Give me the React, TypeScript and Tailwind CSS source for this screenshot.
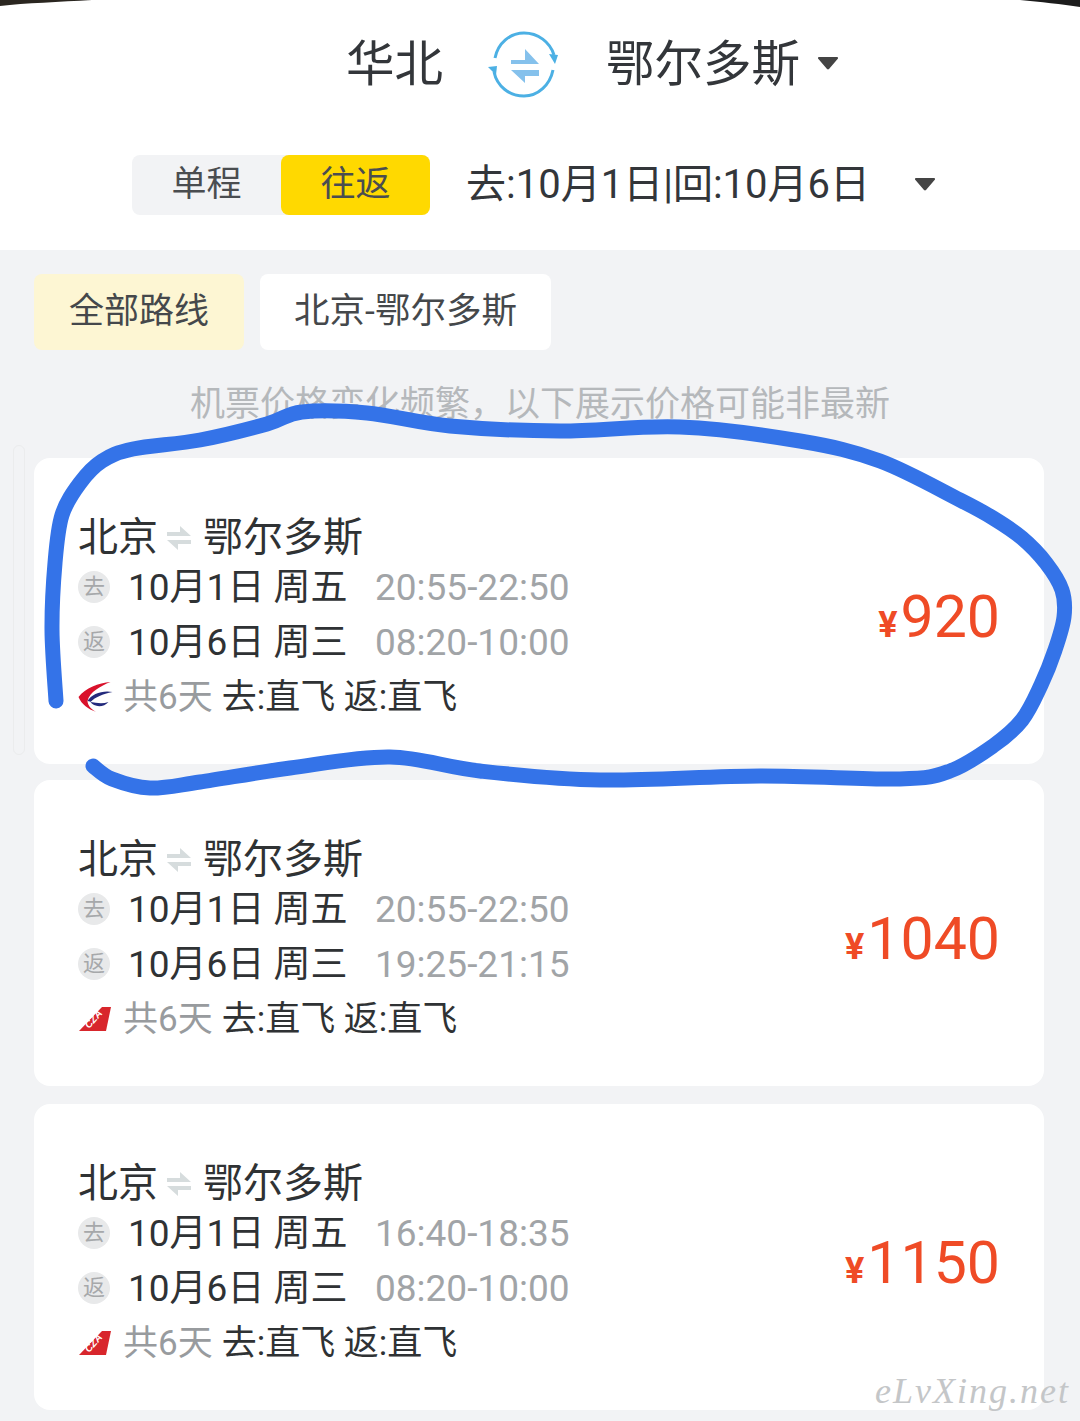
const font = { fontFamily: 'Roboto, "Noto Sans CJK SC", sans-serif' }

interface Flight {
  outTime: string
  backTime: string
  price: string
  logo: 'mu' | 'cz'
}

const flights: Flight[] = [
  { outTime: '20:55-22:50', backTime: '08:20-10:00', price: '920', logo: 'mu' },
  { outTime: '20:55-22:50', backTime: '19:25-21:15', price: '1040', logo: 'cz' },
  { outTime: '16:40-18:35', backTime: '08:20-10:00', price: '1150', logo: 'cz' },
]

// hand drawn marker loop over the first card
const loop: [number, number][] = [
  [56, 701], [52, 630], [55, 563], [62, 515], [80, 483], [102, 461], [133, 449], [200, 440], [267, 424],
  [302, 412], [367, 413], [450, 426], [560, 431], [680, 427], [800, 441], [880, 461], [960, 500], [993, 518],
  [1022, 538], [1046, 563], [1062, 590], [1064, 617], [1055, 650], [1041, 685], [1022, 720], [993, 746],
  [950, 771], [900, 779], [760, 776], [600, 780], [480, 771], [390, 757], [290, 768], [200, 782], [150, 788],
  [112, 779], [93, 766],
]

function smooth(pts: [number, number][]) {
  let d = `M${pts[0][0]} ${pts[0][1]}`
  for (let i = 0; i < pts.length - 1; i++) {
    const p0 = pts[Math.max(i - 1, 0)]
    const p1 = pts[i]
    const p2 = pts[i + 1]
    const p3 = pts[Math.min(i + 2, pts.length - 1)]
    d += `C${p1[0] + (p2[0] - p0[0]) / 6} ${p1[1] + (p2[1] - p0[1]) / 6} ${p2[0] - (p3[0] - p1[0]) / 6} ${p2[1] - (p3[1] - p1[1]) / 6} ${p2[0]} ${p2[1]}`
  }
  return d
}

function SwapIcon() {
  return (
    <svg width="74" height="70" viewBox="0 0 74 70" fill="none" className="shrink-0">
      <path d="M8 28C11 13 23 3 37 3c14 0 26 9 30 22" stroke="#4cb0e4" strokeWidth="3" />
      <path d="M66 40c-3 15-15 26-29 26-15 0-27-10-30-24" stroke="#4cb0e4" strokeWidth="3" />
      <path d="M62 24l9 1-3 9z" fill="#4cb0e4" />
      <path d="M1 37l9-1-1 9z" fill="#4cb0e4" />
      <path d="M24 30h14V19l14 15H24z" fill="#85c1ec" />
      <path d="M52 40H24l14 13v-7h14z" fill="#85c1ec" />
    </svg>
  )
}

function SmallSwap() {
  return (
    <svg width="24" height="26" viewBox="0 0 24 26" className="shrink-0">
      <path d="M0 11h24L13 1v6H0z" fill="#d6dcdd" />
      <path d="M24 15H0l11 10v-6h13z" fill="#d6dcdd" />
    </svg>
  )
}

function Caret({ className }: { className: string }) {
  return (
    <svg width="20" height="14" viewBox="0 0 20 14" className={className}>
      <path d="M1 1h18a1 1 0 0 1 1 1.500L11 13a1.500 1.500 0 0 1-2 0L0 2.500A1 1 0 0 1 1 1z" fill="#444" />
    </svg>
  )
}

function MuLogo() {
  return (
    <svg width="35" height="30" viewBox="0 0 34 30" className="shrink-0">
      <path d="M32 0C20 1 7 6 0 15c3 7 9 12 18 15-4-2-9-6-9-11C11 10 22 4 32 0z" fill="#d9122c" />
      <path d="M34 10c-10-2-21 2-25 9 2 0 3 1 3 1 5-5 12-8 22-10z" fill="#232a7c" />
      <path d="M30 20c-6 2-12 1-18 0 3 5 13 6 18 0z" fill="#232a7c" />
    </svg>
  )
}

function CzLogo() {
  return (
    <svg width="34" height="26" viewBox="0 0 34 26" className="shrink-0">
      <path d="M1 25L24 1h9l-5 24z" fill="#d8262c" />
      <text
        x="11"
        y="23"
        fill="#fff"
        fontSize="10"
        fontWeight="700"
        fontStyle="italic"
        fontFamily="Liberation Sans"
        transform="rotate(-48 11 23)"
      >
        CZA
      </text>
    </svg>
  )
}

function LegBadge({ label }: { label: string }) {
  return (
    <span className="w-[32px] h-[32px] rounded-full bg-[#e8e9ea] text-[#a6a8aa] text-[22px] leading-none flex items-center justify-center shrink-0">
      {label}
    </span>
  )
}

function FlightCard({ flight }: { flight: Flight }) {
  return (
    <div className="h-[306px] rounded-[16px] bg-white pl-[44px] pr-[44px] flex items-center justify-between last:mt-[2px]">
      <div className="mt-[18px]">
        <div className="h-[44px] flex items-center text-[40px] leading-none text-[#2f3234]">
          <span>北京</span>
          <span className="ml-[9px] mr-[12px] flex"><SmallSwap /></span>
          <span>鄂尔多斯</span>
        </div>
        <div className="h-[55px] flex items-center">
          <LegBadge label="去" />
          <span className="ml-[18px] text-[37px] leading-none text-[#2f3234] w-[247px] whitespace-nowrap">10月1日 周五</span>
          <span className="text-[37px] leading-none text-[#a1a4a7]">{flight.outTime}</span>
        </div>
        <div className="h-[55px] flex items-center">
          <LegBadge label="返" />
          <span className="ml-[18px] text-[37px] leading-none text-[#2f3234] w-[247px] whitespace-nowrap">10月6日 周三</span>
          <span className="text-[37px] leading-none text-[#a1a4a7]">{flight.backTime}</span>
        </div>
        <div className="h-[55px] flex items-center">
          <span className="w-[35px] flex">{flight.logo === 'mu' ? <MuLogo /> : <CzLogo />}</span>
          <span className="ml-[10px] text-[35px] leading-none text-[#989b9e]">共6天</span>
          <span className="ml-[9px] text-[35px] leading-none text-[#2f3234] whitespace-nowrap">去:直飞 返:直飞</span>
        </div>
      </div>
      <div className="mt-[10px] flex items-baseline text-[#ef4b26] leading-none">
        <span className="text-[36px] font-bold mr-[3px]">¥</span>
        <span className="text-[59px]">{flight.price}</span>
      </div>
    </div>
  )
}

export default function App() {
  return (
    <div className="relative w-[1080px] h-[1421px] overflow-hidden bg-[#f2f3f5]" style={font}>
      {/* Route header */}
      <div className="bg-white h-[250px]">
        <div className="h-[124px] pt-[6px] pl-[346px] flex items-center text-[48.500px] leading-none text-[#33363a]">
          <span>华北</span>
          <span className="ml-[44px] mr-[45px] flex"><SwapIcon /></span>
          <span>鄂尔多斯</span>
          <Caret className="ml-[18px] mb-[4px]" />
        </div>
        <div className="mt-[31px] pl-[132px] flex items-center">
          <div className="w-[298px] h-[60px] rounded-[8px] bg-[#f2f3f5] flex text-[35px] leading-none text-[#4a4d50]">
            <div className="w-[149px] pb-[1px] flex items-center justify-center">单程</div>
            <div className="w-[149px] pb-[1px] rounded-[8px] bg-[#ffd900] flex items-center justify-center">往返</div>
          </div>
          <span className="ml-[36px] text-[40px] leading-none text-[#33363a] whitespace-nowrap">去:10月1日|回:10月6日</span>
          <Caret className="ml-[45px] mb-[2px]" />
        </div>
      </div>

      {/* Route filter */}
      <div className="pt-[24px] pl-[34px] flex gap-[16px] leading-none">
        <div className="w-[210px] h-[76px] pb-[1px] rounded-[8px] bg-[#fdf6d3] text-[35px] text-[#45484b] flex items-center justify-center">全部路线</div>
        <div className="w-[291px] h-[76px] pb-[1px] rounded-[8px] bg-white text-[35.500px] text-[#45484b] flex items-center justify-center">北京-鄂尔多斯</div>
      </div>

      <div className="mt-[35px] h-[38px] flex items-center justify-center text-[35px] leading-none text-[#b5b8bb]">
        机票价格变化频繁，以下展示价格可能非最新
      </div>

      {/* Results */}
      <div className="mt-[35px] mr-[36px] ml-[34px] flex flex-col gap-[16px]">
        {flights.map((f) => <FlightCard key={f.price} flight={f} />)}
      </div>

      {/* Ghost scrollbar on the left of the list */}
      <div className="absolute left-[13px] top-[445px] w-[12px] h-[310px] rounded-[6px] border border-[#ebeced]" />

      {/* Marker annotation */}
      <svg width="1080" height="1421" viewBox="0 0 1080 1421" fill="none" className="absolute inset-0 pointer-events-none">
        <path d={smooth(loop)} stroke="#3473e8" strokeWidth="15" strokeLinecap="round" strokeLinejoin="round" />
        {/* phone corners showing at the top edge */}
        <path d="M0 0H92C60 2 25 3 0 6z" fill="#2a2620" />
        <path d="M1080 0H1020C1040 2 1062 4 1080 7z" fill="#1c1c1c" />
      </svg>

      {/* Watermark */}
      <span
        className="absolute right-[10px] bottom-[12px] text-[36px] leading-none italic text-[#c4c6c8] tracking-[2px]"
        style={{ fontFamily: '"Liberation Serif", serif' }}
      >
        eLvXing.net
      </span>
    </div>
  )
}
